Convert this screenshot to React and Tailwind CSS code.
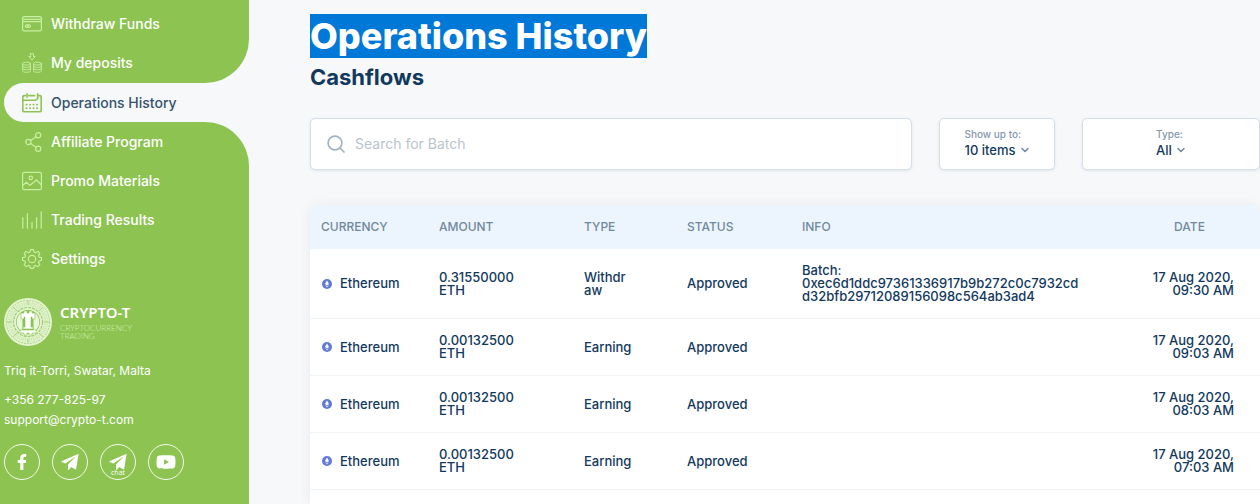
import { FaFacebookF, FaYoutube } from 'react-icons/fa';
import { ChevronDown } from 'lucide-react';

const Icon = ({ children, className = 'text-[#c9efa0]' }) => (
    <svg viewBox="0 0 20 20" className={`w-5 h-5 shrink-0 ${className}`} fill="none" stroke="currentColor" strokeWidth="1.2" strokeLinecap="round" strokeLinejoin="round" aria-hidden="true">
        {children}
    </svg>
);

const CardIcon = () => (
    <Icon>
        <rect x="0.6" y="2.6" width="18.8" height="14.2" rx="1.6" />
        <path d="M0.6 5.4h18.8M0.6 7.6h18.8" />
        <rect x="3.4" y="10.8" width="5" height="2.6" rx="1.3" />
        <path d="M5.9 10.8v2.6" />
    </Icon>
);

const DepositIcon = () => (
    <Icon>
        <g strokeWidth="0.9">
            <path d="M8.6 0.6h2.8v3h1.8L10 7.2 6.8 3.6h1.8z" />
            <ellipse cx="4.5" cy="10.6" rx="3.9" ry="1.5" />
            <path d="M0.6 10.6v7.2c0 2 7.8 2 7.8 0v-7.2M0.6 13c0 2 7.8 2 7.8 0M0.6 15.4c0 2 7.8 2 7.8 0" />
            <ellipse cx="15.5" cy="10.6" rx="3.9" ry="1.5" />
            <path d="M11.6 10.6v7.2c0 2 7.8 2 7.8 0v-7.2M11.6 13c0 2 7.8 2 7.8 0M11.6 15.4c0 2 7.8 2 7.8 0" />
        </g>
    </Icon>
);

const CalendarIcon = () => (
    <Icon className="text-[#8cc351]">
        <path d="M12.6 2.6H6.6M3.4 2.6H2.2Q0.8 2.6 0.8 4v13.4Q0.8 18.8 2.2 18.8h15.6q1.4 0 1.4-1.4V4q0-1.4-1.4-1.4h-1M0.8 7.2h12.6q1.8-0.8 2.6-2.4" strokeWidth="1.6" />
        <path d="M5 0.8v3.4M15.6 0.8v3.4" strokeWidth="1.6" />
        <path d="M4.4 11.6h0.4M7.9 11.6h0.4M11.4 11.6h0.4M14.9 11.6h0.4M4.4 15.2h0.4M7.9 15.2h0.4M11.4 15.2h0.4M14.9 15.2h0.4" strokeWidth="1.7" />
    </Icon>
);

const ShareIcon = () => (
    <Icon>
        <circle cx="6.4" cy="10" r="2.6" />
        <circle cx="16.2" cy="3.2" r="2.6" />
        <circle cx="16.2" cy="16.8" r="2.6" />
        <path d="M8.6 8.5l5.4-3.8M8.6 11.5l5.4 3.8" />
    </Icon>
);

const PictureIcon = () => (
    <Icon>
        <rect x="0.6" y="1.4" width="18.8" height="17.2" rx="1.4" />
        <circle cx="8.8" cy="6.9" r="1.7" />
        <path d="M0.8 14.2l3.8-3 3 3.2 7-5.4 4.8 5" />
    </Icon>
);

const BarsIcon = () => (
    <Icon>
        <path d="M0.8 7.6v10.6M5.4 3.6v14.6M10 12.4v5.8M14.6 7.6v10.6M19.2 1.8v16.4" />
    </Icon>
);

const GearIcon = () => (
    <Icon>
        <circle cx="10" cy="10" r="3.7" />
        <path d="M8.5 0.6h3l0.7 2.5 1.4 0.6 2.3-1.3 1.9 2-1.3 2.2 0.6 1.5 2.4 0.6v2.7l-2.4 0.6-0.6 1.5 1.3 2.2-1.9 2-2.3-1.3-1.4 0.6-0.7 2.4h-3l-0.7-2.4-1.4-0.6-2.3 1.3-1.9-2 1.3-2.2-0.6-1.5-2.4-0.6V8.7l2.4-0.6 0.6-1.5-1.3-2.2 1.9-2 2.3 1.3 1.4-0.6z" />
    </Icon>
);

const PlaneIcon = () => (
    <svg viewBox="0 0 18 18" className="w-[18px] h-[18px]" fill="currentColor" aria-hidden="true">
        <path d="M17.6 0.8L0.6 8.2q-0.7 0.4 0 0.8l3.9 1.6L15 3.2 7 11.6v4.9q0.3 0.9 1 0.2l2.1-2.7 4 2.2q0.8 0.3 1.1-0.5z" />
    </svg>
);

const Coin = () => (
    <svg viewBox="0 0 48 48" className="w-12 h-12 shrink-0" aria-hidden="true">
        <circle cx="24" cy="24" r="24" fill="#e3f3d0" />
        <circle cx="24" cy="24" r="21.6" fill="none" stroke="#9fce6e" strokeWidth="0.8" strokeDasharray="2 1" />
        <circle cx="24" cy="24" r="18" fill="none" stroke="#cde7b0" strokeWidth="4.5" strokeDasharray="1 1" />
        <circle cx="24" cy="24" r="14.5" fill="none" stroke="#9fce6e" strokeWidth="1.2" strokeDasharray="3 1" />
        <path d="M24 3v4M24 41v4M3 24h5M40 24h5M9 9l4 4M35 35l4 4M39 9l-4 4M13 35l-4 4" stroke="#9fce6e" strokeWidth="0.8" />
        <circle cx="24" cy="24" r="12" fill="#8cc351" />
        <path d="M17 15a11.500 11.500 0 0 0 0 18l1.500-2V17zM31 15a11.500 11.500 0 0 1 0 18l-1.500-2V17z" fill="#eaf6dc" />
        <path d="M17 15h3v-2h3v2h2v-2h3v2h3v6h-3v-2h-1v10h2v2H19v-2h2V19h-1v2h-3zM16 32h16v3h-4v2h-3v-2h-2v2h-3v-2h-4z" fill="#fff" stroke="#8cc351" strokeWidth="0.6" />
    </svg>
);

const EthIcon = () => (
    <svg viewBox="0 0 10 10" className="w-[10px] h-[10px] shrink-0" aria-hidden="true">
        <circle cx="5" cy="5" r="5" fill="#627bd4" />
        <path d="M5 1.6L7 5.1 5 6.3 3 5.1z" fill="#fff" />
        <path d="M3 5.8L5 8.5 7 5.8 5 7z" fill="#dfe5f8" />
    </svg>
);

const NavItem = ({ icon: ItemIcon, label, active }) => (
    <a href="#" aria-current={active ? 'page' : undefined} className={active
        ? 'h-[39px] ml-1 pl-[18px] rounded-l-full bg-[#f7f8fa] flex items-center gap-[9px] text-[14px] font-medium text-[#35526e]'
        : 'h-[39px] pl-[22px] flex items-center gap-[9px] text-[14px] font-medium text-white'}>
        <ItemIcon />
        {label}
    </a>
);

const SocialLink = ({ label, children }) => (
    <a href="#" aria-label={label} className="relative w-9 h-9 rounded-full border border-white/90 flex items-center justify-center">
        {children}
    </a>
);

const Sidebar = () => (
    <aside className="w-[249px] shrink-0 flex flex-col text-white">
        <div className="bg-[#8cc351] rounded-br-[44px] pt-1 pb-px">
            <NavItem icon={CardIcon} label="Withdraw Funds" />
            <NavItem icon={DepositIcon} label="My deposits" />
        </div>
        <div className="bg-linear-to-r from-[#8cc351] from-50% to-[#f7f8fa] to-50%">
            <NavItem icon={CalendarIcon} label="Operations History" active />
        </div>
        <div className="bg-[#8cc351] rounded-tr-[44px] flex-1">
            <NavItem icon={ShareIcon} label="Affiliate Program" />
            <NavItem icon={PictureIcon} label="Promo Materials" />
            <NavItem icon={BarsIcon} label="Trading Results" />
            <NavItem icon={GearIcon} label="Settings" />

            <div className="px-1 pt-5">
                <div className="flex items-center gap-2">
                    <Coin />
                    <div>
                        <div className="font-['Noto_Sans'] font-semibold text-[15px] leading-4">CRYPTO-T</div>
                        <div className="mt-1 w-20 font-['Lato'] font-light text-[8px] leading-2 text-[#d6efb9]">CRYPTOCURRENCY TRADING</div>
                    </div>
                </div>
                <div className="mt-[17px] text-[12px] leading-4">
                    <p>Triq it-Torri, Swatar, Malta</p>
                    <p className="mt-[13px]"><a href="tel:+35627782597">+356 277-825-97</a></p>
                    <p className="mt-1"><a href="mailto:support@crypto-t.com">support@crypto-t.com</a></p>
                </div>
                <div className="mt-4 flex gap-3">
                    <SocialLink label="Facebook"><FaFacebookF className="w-4 h-4" /></SocialLink>
                    <SocialLink label="Telegram"><PlaneIcon /></SocialLink>
                    <SocialLink label="Telegram chat">
                        <PlaneIcon />
                        <span className="absolute inset-x-0 bottom-0.5 text-center text-[7px] leading-2 font-['Open_Sans']">chat</span>
                    </SocialLink>
                    <SocialLink label="YouTube"><FaYoutube className="w-5 h-5" /></SocialLink>
                </div>
            </div>
        </div>
    </aside>
);

const Dropdown = ({ id, label, options, className }) => (
    <div className={`pb-1 rounded-[5px] border border-[#d3dfe9] bg-white shadow-sm shadow-[#d3dfe9]/50 flex items-center justify-center ${className}`}>
        <div>
            <label htmlFor={id} className="block text-[10px] leading-4 font-medium text-[#8598ab]">{label}</label>
            <div className="flex items-center gap-1 text-[#12395d]">
                <select id={id} className="appearance-none field-sizing-content bg-transparent text-[13px] leading-4 font-medium outline-none">
                    {options.map((option) => <option key={option}>{option}</option>)}
                </select>
                <ChevronDown className="w-3 h-3 -mx-px text-[#6f8aa3]" strokeWidth={3} aria-hidden="true" />
            </div>
        </div>
    </div>
);

const operations = [
    { amount: '0.31550000', type: 'Withdraw', info: '0xec6d1ddc97361336917b9b272c0c7932cdd32bfb29712089156098c564ab3ad4', time: '09:30 AM' },
    { amount: '0.00132500', type: 'Earning', time: '09:03 AM' },
    { amount: '0.00132500', type: 'Earning', time: '08:03 AM' },
    { amount: '0.00132500', type: 'Earning', time: '07:03 AM' },
];

const OperationsTable = () => (
    <div className="mt-[35px] flex-1 rounded-t-[10px] bg-white overflow-hidden shadow-[0_0_12px_rgba(40,60,80,0.08)]">
        <table className="w-full table-fixed text-left text-[13px] leading-[13px] font-medium text-[#12395d]">
            <colgroup>
                <col className="w-[129px]" />
                <col className="w-[145px]" />
                <col className="w-[103px]" />
                <col className="w-[115px]" />
                <col />
                <col className="w-[145px]" />
            </colgroup>
            <thead className="bg-[#ecf5fd] text-[12px] text-[#71889c]">
                <tr className="h-11">
                    <th className="pl-[11px] pb-0.5 font-medium">CURRENCY</th>
                    <th className="pb-0.5 font-medium">AMOUNT</th>
                    <th className="pb-0.5 font-medium">TYPE</th>
                    <th className="pb-0.5 font-medium">STATUS</th>
                    <th className="pb-0.5 font-medium">INFO</th>
                    <th className="pb-0.5 pl-1 font-medium text-center">DATE</th>
                </tr>
            </thead>
            <tbody>
                {operations.map((op) => (
                    <tr key={op.time} className="h-[57px] border-b border-[#f1f3f5]">
                        <td className="pl-3">
                            <span className="flex items-center gap-2"><EthIcon />Ethereum</span>
                        </td>
                        <td>{op.amount}<br />ETH</td>
                        <td className="pr-[55px] break-all">{op.type}</td>
                        <td>Approved</td>
                        <td className="py-[15px] pr-8 break-all">{op.info && <>Batch:<br />{op.info}</>}</td>
                        <td className="pr-[26px] text-right">17 Aug 2020,<br />{op.time}</td>
                    </tr>
                ))}
            </tbody>
        </table>
    </div>
);

const App = () => {
    return (
        <div className="min-h-screen flex bg-[#f7f8fa] font-['Inter',sans-serif]">
            <Sidebar />
            <main className="flex-1 min-w-0 pl-[61px] flex flex-col">
                <h1 className="pt-3.5 text-[36px] leading-[44px] font-extrabold text-white">
                    <span className="bg-[#0078d7]">Operations History</span>
                </h1>
                <h2 className="mt-1 text-[22px] leading-[30px] font-bold text-[#12395d]">Cashflows</h2>

                <div className="mt-[26px] h-[52px] flex gap-[27px]">
                    <div className="flex-1 rounded-[5px] border border-[#d3dfe9] bg-white shadow-sm shadow-[#d3dfe9]/50 flex items-center gap-[10px] pl-4">
                        <svg viewBox="0 0 18 18" className="w-[18px] h-[18px] shrink-0 text-[#a3b4c4]" fill="none" stroke="currentColor" strokeWidth="1.7" strokeLinecap="round" aria-hidden="true">
                            <circle cx="8" cy="8" r="6.9" />
                            <path d="M13 13l4 4" />
                        </svg>
                        <input type="text" aria-label="Search for Batch" placeholder="Search for Batch" className="flex-1 min-w-0 h-full pb-0.5 text-[14px] text-[#12395d] placeholder:text-[#b9c4cf] outline-none" />
                    </div>
                    <Dropdown id="limit" label="Show up to:" options={['10 items', '25 items', '50 items']} className="w-[116px]" />
                    <Dropdown id="type" label="Type:" options={['All', 'Withdraw', 'Earning']} className="w-[178px]" />
                </div>

                <OperationsTable />
            </main>
        </div>
    );
};

export default App;
